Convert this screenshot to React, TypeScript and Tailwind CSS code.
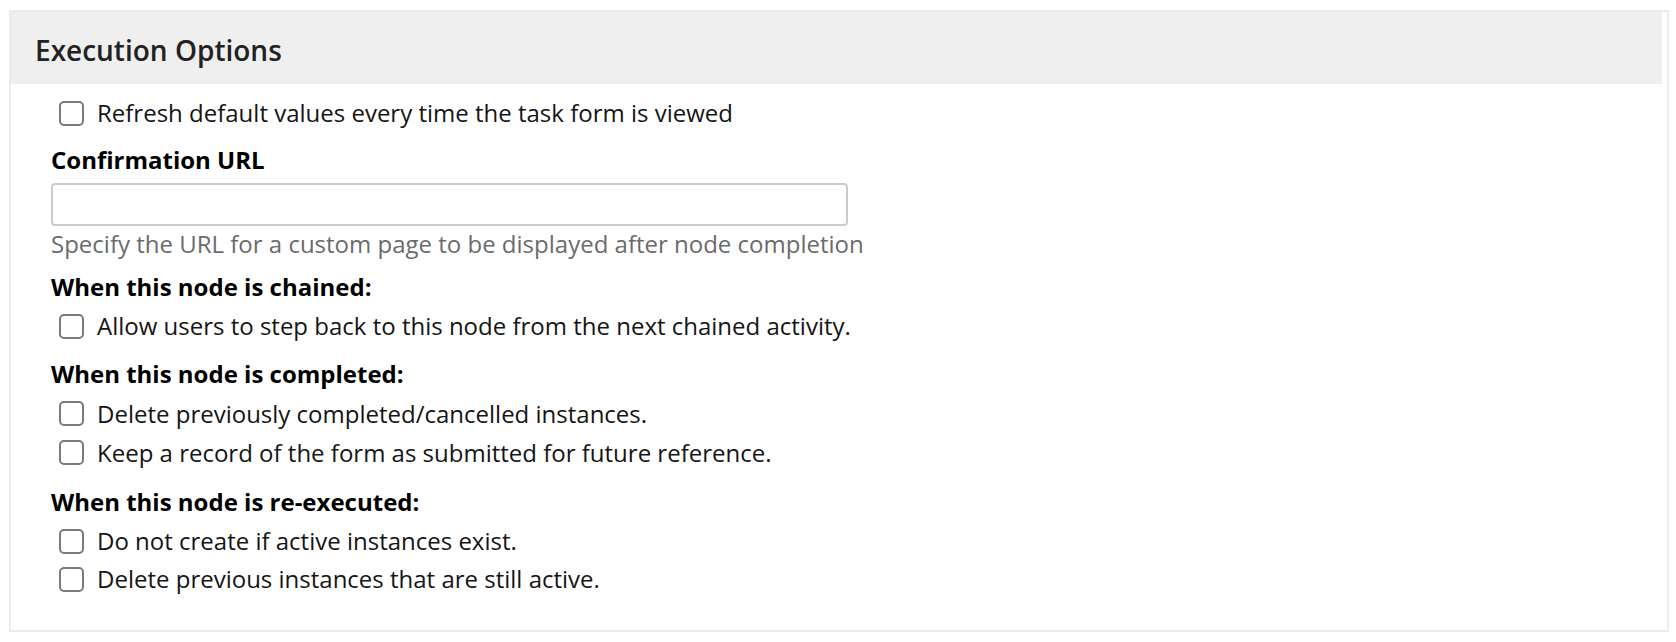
import React from "react";

type Option = { id: string; label: string };

const chainedOptions: Option[] = [
  { id: "step-back", label: "Allow users to step back to this node from the next chained activity." },
];

const completedOptions: Option[] = [
  { id: "delete-completed", label: "Delete previously completed/cancelled instances." },
  { id: "keep-record", label: "Keep a record of the form as submitted for future reference." },
];

const reExecutedOptions: Option[] = [
  { id: "no-create", label: "Do not create if active instances exist." },
  { id: "delete-active", label: "Delete previous instances that are still active." },
];

const CheckboxRow: React.FC<{ option: Option; className?: string }> = ({ option, className = "h-[39px]" }) => (
  <label htmlFor={option.id} className={`flex items-center pl-2 gap-[13px] cursor-pointer ${className}`}>
    <input
      id={option.id}
      type="checkbox"
      className="appearance-none w-[25px] h-[25px] shrink-0 rounded-[5px] border-2 border-[#7a7a7a] bg-white"
    />
    <span className="text-[24px] leading-7 text-[#151515]">{option.label}</span>
  </label>
);

const SectionLabel: React.FC<{ children: React.ReactNode; className?: string }> = ({ children, className = "" }) => (
  <div className={`text-[24px] leading-7 font-bold text-black ${className}`}>{children}</div>
);

const App: React.FC = () => {
  return (
    <div className="min-h-screen bg-white pt-[10px] pl-[9px] pr-[7px]" style={{ fontFamily: '"Open Sans", sans-serif' }}>
      <section className="border-2 border-[#ececec] bg-white">
        <header className="h-[72px] mr-[5px] bg-[#efefef] flex items-center pl-6 pt-1">
          <h2 className="text-[28px] font-semibold text-[#222]">Execution Options</h2>
        </header>

        <div className="pt-[9px] pb-[32px] px-10">
          <CheckboxRow option={{ id: "refresh", label: "Refresh default values every time the task form is viewed" }} className="h-10" />

          <SectionLabel className="mt-[13px]">Confirmation URL</SectionLabel>
          <input
            type="text"
            className="mt-[9px] block w-[797px] h-[43px] rounded-[4px] border-2 border-[#cbcbcb] bg-white px-3 text-[20px] outline-none"
          />
          <p className="mt-[4px] text-[24px] leading-7 text-[#6b6b6b]">
            Specify the URL for a custom page to be displayed after node completion
          </p>

          <SectionLabel className="mt-[15px]">When this node is chained:</SectionLabel>
          <div className="mt-[5px]">
            {chainedOptions.map((o) => (
              <CheckboxRow key={o.id} option={o} className="h-10" />
            ))}
          </div>

          <SectionLabel className="mt-[14px]">When this node is completed:</SectionLabel>
          <div className="mt-[6px]">
            {completedOptions.map((o) => (
              <CheckboxRow key={o.id} option={o} />
            ))}
          </div>

          <SectionLabel className="mt-[16px]">When this node is re-executed:</SectionLabel>
          <div className="mt-[6px]">
            {reExecutedOptions.map((o) => (
              <CheckboxRow key={o.id} option={o} className="h-[38px]" />
            ))}
          </div>
        </div>
      </section>
    </div>
  );
};

export default App;
